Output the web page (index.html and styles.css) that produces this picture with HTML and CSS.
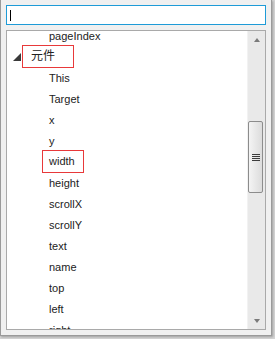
FILE: index.html
```html
<!DOCTYPE html>
<html lang="zh">
<head>
  <meta charset="UTF-8" />
  <title>属性选择</title>
  <link rel="stylesheet" href="styles.css">
</head>
<body>
  <div class="popup">
    <div class="search"><span class="caret"></span></div>

    <div class="listbox">
      <div class="items">
        <div class="row child">pageIndex</div>
        <div class="row parent">
          <svg class="toggle" width="8" height="8" viewBox="0 0 8 8"><polygon points="8,0 8,8 0,8" /></svg>
          <span class="mark mark-parent">元件</span>
        </div>
        <div class="row child">This</div>
        <div class="row child">Target</div>
        <div class="row child">x</div>
        <div class="row child">y</div>
        <div class="row child"><span class="mark mark-child">width</span></div>
        <div class="row child">height</div>
        <div class="row child">scrollX</div>
        <div class="row child">scrollY</div>
        <div class="row child">text</div>
        <div class="row child">name</div>
        <div class="row child">top</div>
        <div class="row child">left</div>
        <div class="row child">right</div>
      </div>

      <div class="scrollbar">
        <div class="arrow up"></div>
        <div class="track">
          <div class="thumb"><span class="grip"></span></div>
        </div>
        <div class="arrow down"></div>
      </div>
    </div>
  </div>
</body>
</html>
```

FILE: styles.css
```css
body {
  margin: 0;
  width: 275px;
  height: 339px;
  overflow: hidden;
  background: #d4d4d4;
  font-family: "Liberation Sans", "Noto Sans CJK SC", sans-serif;
  font-size: 11px;
  color: #222;
}

.popup {
  box-sizing: border-box;
  width: 272px;
  height: 336px;
  padding: 5px;
  background: #f0f0f0;
  border: 1px solid #9a9a9a;
  border-top: 0;
  box-shadow: 1px 1px 2px rgba(0, 0, 0, 0.25);
}

.search {
  box-sizing: border-box;
  height: 20px;
  background: #fff;
  border: 1px solid #1e9bd7;
  padding: 4px 0 0 3px;
}

.caret {
  display: block;
  width: 1px;
  height: 11px;
  background: #000;
}

.listbox {
  box-sizing: border-box;
  height: 300px;
  margin-top: 5px;
  background: #fff;
  border: 1px solid #a9a9a9;
  display: flex;
  overflow: hidden;
}

.items {
  flex: 1;
  margin-top: -6px;
}

.row {
  height: 21px;
  display: flex;
  align-items: center;
  white-space: nowrap;
}

.child {
  padding-left: 42px;
}

.parent {
  padding-left: 6px;
}

.toggle {
  fill: #3a3a3a;
  margin-right: 10px;
}

.mark {
  border: 1px solid #e8393a;
  line-height: 21px;
}

.mark-parent {
  margin-left: -9px;
  padding: 0 18px 0 8px;
  font-size: 12px;
}

.mark-child {
  margin-left: -7px;
  padding: 0 8px 0 6px;
}

.scrollbar {
  width: 17px;
  background: #e9e9e9;
  border-left: 1px solid #f2f2f2;
  display: flex;
  flex-direction: column;
}

.arrow {
  height: 17px;
  display: flex;
  align-items: center;
  justify-content: center;
}

.arrow::before {
  content: "";
  width: 0;
  height: 0;
  border-left: 3px solid transparent;
  border-right: 3px solid transparent;
}

.up::before {
  border-bottom: 4px solid #7a7a7a;
}

.down::before {
  border-top: 4px solid #7a7a7a;
}

.track {
  flex: 1;
  padding-top: 73px;
}

.thumb {
  box-sizing: border-box;
  width: 15px;
  height: 72px;
  border: 1px solid #8c8c8c;
  border-radius: 2px;
  background: linear-gradient(to right, #f4f4f4, #dcdcdc);
  display: flex;
  align-items: center;
  justify-content: center;
}

.grip {
  width: 8px;
  height: 7px;
  background: repeating-linear-gradient(to bottom, #3c3c3c 0, #3c3c3c 1px, transparent 1px, transparent 2px);
}
```
